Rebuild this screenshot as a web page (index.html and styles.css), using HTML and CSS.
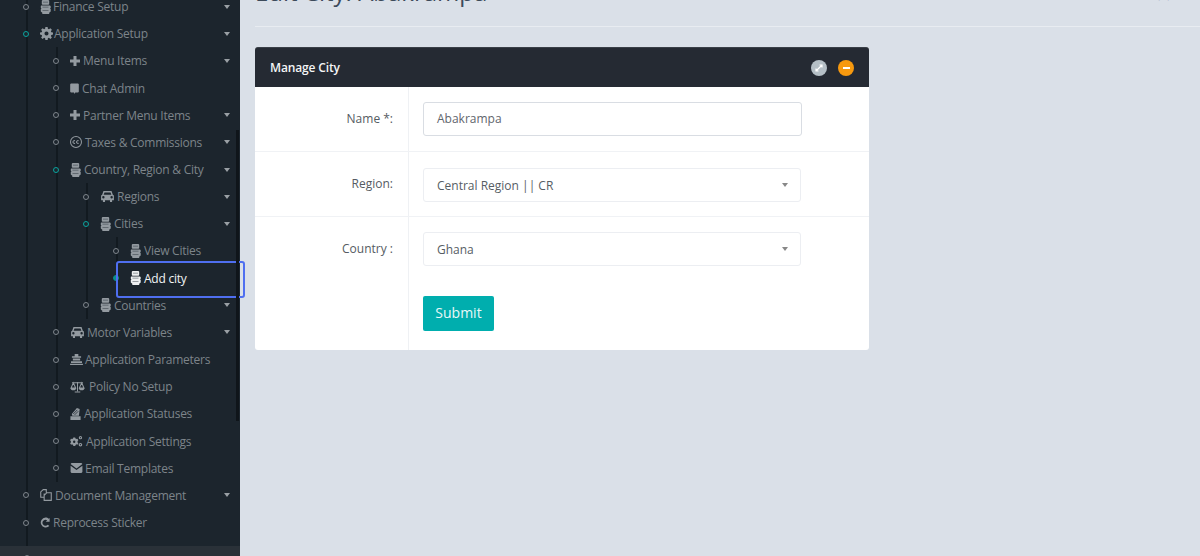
FILE: index.html
```html
<!DOCTYPE html>
<html lang="en">
<head>
<meta charset="utf-8">
<title>Edit City: Abakrampa</title>
<link rel="stylesheet" href="styles.css">
</head>
<body>
<svg class="defs" width="0" height="0" aria-hidden="true">
  <symbol id="i-road" viewBox="0 0 11 14"><path fill-rule="evenodd" d="M2.500 0h6l.7.7v3.500l-.7.6h-6l-.7-.6V.7zM1 5.500h9l.7.7v1.600l-.7.6.7.6v2.500l-1.500 1.200V14H2.300v-1.300L.8 11.500V9l.7-.6-.7-.6V6.200z"/><path fill="#1c252d" opacity=".55" d="M3 1.700h5v.9H3zM2.500 6.800h6v.8h-6zM2.500 10h6v.8h-6z"/></symbol>
  <symbol id="i-gear" viewBox="0 0 14 14"><path fill-rule="evenodd" d="M5.800 0h2.400l.3 1.900 1.100.5L11.200 1.300l1.600 1.600-1.100 1.600.5 1.100 1.800.3v2.300l-1.800.3-.5 1.200 1.100 1.500-1.600 1.600-1.600-1.100-1.100.5-.3 1.800H5.800l-.3-1.800-1.100-.5-1.600 1.100-1.600-1.600 1.100-1.500-.5-1.200L0 8.200V5.900l1.800-.3.500-1.100-1.100-1.600 1.600-1.600 1.600 1.100 1.100-.5zM7 4.800a2.200 2.200 0 100 4.400 2.200 2.200 0 000-4.400z"/></symbol>
  <symbol id="i-plus" viewBox="0 0 12 12"><path d="M4.200 0h3.600v4.200H12v3.600H7.800V12H4.200V7.800H0V4.200h4.200z"/></symbol>
  <symbol id="i-chat" viewBox="0 0 10 12"><path d="M1 .5h8l.8.8v8.300l-.8.8H6L4.500 12v-1.600H1l-.8-.8V1.300z"/></symbol>
  <symbol id="i-cc" viewBox="0 0 14 14"><path fill-rule="evenodd" d="M7 0a7 7 0 110 14A7 7 0 017 0zm0 1.200a5.800 5.800 0 100 11.600A5.800 5.800 0 007 1.200z"/><path fill="none" stroke="currentColor" stroke-width="1.200" d="M5.800 5.600a1.600 1.600 0 100 2.800M10 5.600a1.600 1.600 0 100 2.800"/></symbol>
  <symbol id="i-car" viewBox="0 0 16 12"><path fill-rule="evenodd" d="M3.600 0h8.800l1.400 4 1.200 1v5h-2v2h-2.300v-2H5.300v2H3v-2H1V5l1.200-1zM4.700 1.500 3.800 4h8.400l-.9-2.500zM3.500 5.500a1.300 1.300 0 100 2.600 1.300 1.300 0 000-2.600zm9 0a1.300 1.300 0 100 2.600 1.300 1.300 0 000-2.600z"/></symbol>
  <symbol id="i-stack" viewBox="0 0 14 12"><path d="M5 0h4v2.500h3v1.500H2V2.500h3zM3 5h8v2H3zM1 8h12v1.800H1zM0 10.500h14V12H0z"/></symbol>
  <symbol id="i-scale" viewBox="0 0 16 13"><path fill="none" stroke="currentColor" stroke-width="1.100" d="M2 2h12M8 1v10M5 12h6M3.500 2 1 7.500h5zM12.500 2 10 7.500h5z"/><path d="M.5 7.500h6a3 2.500 0 01-6 0zM9.500 7.500h6a3 2.500 0 01-6 0z"/></symbol>
  <symbol id="i-status" viewBox="0 0 11 13"><path d="M0 9h11v4H0zM1.500 6.500 7 0l3 1-.8 7.500H2z"/><path fill="none" stroke="#1c252d" stroke-width=".8" d="M3 6.500 7.500 2M4.500 7.500 8.500 3.500"/></symbol>
  <symbol id="i-cogs" viewBox="0 0 14 12"><path fill-rule="evenodd" d="M3.500 1.500h2l.4 1.200 1.300.7L8 3l1 1.700-.9 1 .1 1.300.9.800L8 9.500l-1-.4-1 .8-.4 1.100h-2l-.4-1.100-1-.8-1.100.4L0 7.800l.9-.8V5.700L0 4.700 1 3l1.200.4L3.200 2.700zM4.500 5a1.300 1.300 0 100 2.600 1.300 1.300 0 000-2.600z"/><path fill-rule="evenodd" d="M11.300 0a1.800 1.800 0 110 3.600 1.800 1.800 0 010-3.600zm0 1.200a.6.600 0 100 1.200.6.600 0 000-1.200zM11.300 7.500a2 2 0 110 4 2 2 0 010-4zm0 1.300a.7.700 0 100 1.400.7.700 0 000-1.400z"/></symbol>
  <symbol id="i-mail" viewBox="0 0 13 11"><path d="M0 1.200 1 0h11l1 1.200L6.500 6zM0 3l6.500 4.800L13 3v7l-1 1H1l-1-1z"/></symbol>
  <symbol id="i-docs" viewBox="0 0 13 13"><path fill="none" stroke="currentColor" stroke-width="1.200" d="M4 9H.8V3.200L3.500.7h3.300V4M4.500 5V12.300h7.700V4H7.500L4.500 6.800"/></symbol>
  <symbol id="i-redo" viewBox="0 0 12 12"><path d="M10.500 1v4.300H6.200l1.700-1.700A3.300 3.300 0 106 9.600c1 0 1.900-.4 2.500-1.200l1.700 1.500A5.500 5.500 0 116 .5c1.400 0 2.700.5 3.500 1.500z"/></symbol>
</svg>

<div class="app">
  <nav class="sidebar">
    <ul class="tree tree-root">
      <li><div class="row"><svg class="ic ic-road ic-tight"><use href="#i-road"/></svg><span>Finance Setup</span><i class="caret"></i></div></li>
      <li>
        <div class="row is-open"><svg class="ic ic-gear"><use href="#i-gear"/></svg><span>Application Setup</span><i class="caret"></i></div>
        <ul class="tree">
          <li><div class="row"><svg class="ic ic-plus"><use href="#i-plus"/></svg><span>Menu Items</span><i class="caret"></i></div></li>
          <li><div class="row"><svg class="ic ic-chat"><use href="#i-chat"/></svg><span>Chat Admin</span></div></li>
          <li><div class="row"><svg class="ic ic-plus"><use href="#i-plus"/></svg><span>Partner Menu Items</span><i class="caret"></i></div></li>
          <li><div class="row"><svg class="ic ic-cc"><use href="#i-cc"/></svg><span>Taxes &amp; Commissions</span><i class="caret"></i></div></li>
          <li>
            <div class="row is-open"><svg class="ic ic-road"><use href="#i-road"/></svg><span>Country, Region &amp; City</span><i class="caret"></i></div>
            <ul class="tree">
              <li><div class="row"><svg class="ic ic-car"><use href="#i-car"/></svg><span>Regions</span><i class="caret"></i></div></li>
              <li>
                <div class="row is-open"><svg class="ic ic-road"><use href="#i-road"/></svg><span>Cities</span><i class="caret"></i></div>
                <ul class="tree">
                  <li><div class="row"><svg class="ic ic-road"><use href="#i-road"/></svg><span>View Cities</span></div></li>
                  <li><div class="row is-current"><svg class="ic ic-road"><use href="#i-road"/></svg><span>Add city</span></div></li>
                </ul>
              </li>
              <li><div class="row"><svg class="ic ic-road"><use href="#i-road"/></svg><span>Countries</span><i class="caret"></i></div></li>
            </ul>
          </li>
          <li><div class="row"><svg class="ic ic-car"><use href="#i-car"/></svg><span>Motor Variables</span><i class="caret"></i></div></li>
          <li><div class="row"><svg class="ic ic-stack"><use href="#i-stack"/></svg><span>Application Parameters</span></div></li>
          <li><div class="row"><svg class="ic ic-scale"><use href="#i-scale"/></svg><span>Policy No Setup</span></div></li>
          <li><div class="row"><svg class="ic ic-status"><use href="#i-status"/></svg><span>Application Statuses</span></div></li>
          <li><div class="row"><svg class="ic ic-cogs"><use href="#i-cogs"/></svg><span>Application Settings</span></div></li>
          <li><div class="row"><svg class="ic ic-mail"><use href="#i-mail"/></svg><span>Email Templates</span></div></li>
        </ul>
      </li>
      <li><div class="row"><svg class="ic ic-docs"><use href="#i-docs"/></svg><span>Document Management</span><i class="caret"></i></div></li>
      <li><div class="row"><svg class="ic ic-redo"><use href="#i-redo"/></svg><span>Reprocess Sticker</span></div></li>
    </ul>
    <div class="side-foot"></div>
    <div class="scroll-thumb"></div>
  </nav>

  <main class="main">
    <header class="page-head">
      <h1>Edit City: Abakrampa</h1>
      <span class="head-mark">&#215;</span>
    </header>

    <section class="panel">
      <div class="panel-head">
        <h2>Manage City</h2>
        <div class="panel-tools">
          <span class="tool tool-grey"><svg viewBox="0 0 10 10"><path d="M2 8 8 2M5.500 2H8v2.500M2 5.500V8h2.500"/></svg></span>
          <span class="tool tool-orange"><i></i></span>
        </div>
      </div>
      <form class="form">
        <div class="form-row row-name">
          <label class="f-label">Name *:</label>
          <div class="f-field"><div class="input">Abakrampa</div></div>
        </div>
        <div class="form-row row-region">
          <label class="f-label">Region:</label>
          <div class="f-field"><div class="select"><span>Central Region || CR</span><i class="sel-caret"></i></div></div>
        </div>
        <div class="form-row row-country">
          <label class="f-label">Country :</label>
          <div class="f-field">
            <div class="select"><span>Ghana</span><i class="sel-caret"></i></div>
            <button class="btn" type="button">Submit</button>
          </div>
        </div>
      </form>
    </section>
  </main>
</div>
</body>
</html>
```
FILE: styles.css
```css
*, *::before, *::after { box-sizing: border-box; }
html, body { margin: 0; height: 100%; overflow: hidden; }
body { font-family: "Open Sans", "Liberation Sans", sans-serif; font-size: 12px; background: #dae0e8; color: #555; }
.defs { position: absolute; }

.app { display: flex; height: 556px; }

/* sidebar */
.sidebar { position: relative; width: 240px; flex: none; height: 556px; background: #1c252d; display: flex; flex-direction: column; }
.tree { list-style: none; margin: 0 0 0 28px; padding: 0; border-left: 2px solid #121a20; }
.tree-root { margin: -7px 0 0 26px; flex: 1; }
.row { position: relative; display: flex; align-items: center; height: 27.16px; padding: 0 10px 0 12px; color: #7d848a; font-size: 12px; letter-spacing: -.25px; white-space: nowrap; }
.row::before { content: ""; position: absolute; left: -5px; top: 50%; width: 6px; height: 6px; margin-top: -3px; border: 1.500px solid #7f868c; border-radius: 50%; background: #1c252d; }
.row.is-open::before { border-color: #0aa5a0; }
.row.is-current { color: #f2f4f5; }
.row.is-current::before { background: #0a8f8c; border-color: #0a8f8c; }
.row.is-current::after { content: ""; position: absolute; left: -2px; top: -4px; width: 129px; height: 37px; border: 2px solid #4f6ff0; border-radius: 3px; }
.caret { margin-left: auto; width: 0; height: 0; border-left: 3.500px solid transparent; border-right: 3.500px solid transparent; border-top: 4px solid #9aa0a5; }
.ic { flex: none; fill: currentColor; color: #939aa0; margin-right: 3px; }
.is-current .ic { color: #eef0f1; }
.ic-road { width: 11px; height: 14px; margin-right: 3px; }
.ic-road.ic-tight { margin-right: 2px; }
.ic-gear { width: 13px; height: 13px; margin-right: 1px; }
.ic-plus { width: 10px; height: 10px; }
.ic-chat { width: 9px; height: 11px; }
.ic-cc { width: 12px; height: 12px; }
.ic-car { width: 15px; height: 11px; margin-right: 2px; }
.ic-stack { width: 13px; height: 11px; margin-right: 2px; }
.ic-scale { width: 15px; height: 12px; margin-right: 4px; }
.ic-status { width: 11px; height: 12px; }
.ic-cogs { width: 13px; height: 11px; }
.ic-mail { width: 13px; height: 10px; margin-right: 2px; }
.ic-docs { width: 12px; height: 12px; }
.ic-redo { width: 11px; height: 11px; margin-right: 2px; }
.side-foot { position: relative; height: 10px; flex: none; background: #2a3138; }
.side-foot::before { content: ""; position: absolute; left: 24px; top: 9px; width: 6px; height: 6px; border: 1.500px solid #7f868c; border-radius: 50%; }
.scroll-thumb { position: absolute; right: 1px; top: 130px; width: 3px; height: 291px; background: #0f151a; }

/* main */
.main { flex: 1; padding: 0 0 0 15px; min-width: 0; }
.page-head { display: flex; justify-content: space-between; margin-top: -23px; height: 50px; border-bottom: 1px solid #e8ecf1; }
.page-head h1 { margin: 0; font-size: 24px; line-height: 30px; font-weight: 400; color: #3c4a5a; }
.head-mark { margin: 9px 29px 0 0; font-size: 26px; line-height: 16px; color: #7c8aa8; }

.panel { width: 614px; margin-top: 20px; background: #fff; border-radius: 3px; }
.panel-head { display: flex; align-items: center; justify-content: space-between; height: 40px; padding: 0 15px; background: #252a33; border-radius: 3px 3px 0 0; border-top: 1px solid #3a4048; }
.panel-head h2 { margin: 0; font-size: 12px; font-weight: 600; letter-spacing: -.15px; color: #f4f5f6; }
.panel-tools { display: flex; gap: 11px; }
.tool { display: flex; align-items: center; justify-content: center; width: 16px; height: 16px; border-radius: 50%; }
.tool svg { width: 10px; height: 10px; fill: none; stroke: #fff; stroke-width: 1.200; }
.tool-grey { background: #b5bfc6; }
.tool-orange { background: #f7990f; }
.tool-orange i { width: 7px; height: 2px; background: #fff; }

.form-row { display: grid; grid-template-columns: 154px 1fr; }
.row-name { height: 64px; }
.row-region { height: 65px; }
.row-country { height: 134px; }
.form-row + .form-row { border-top: 1px solid #f0f2f5; }
.f-label { padding: 23px 15px 0 0; text-align: right; color: #555b62; font-size: 12px; border-right: 1px solid #eff1f4; }
.f-field { padding: 15px 0 0 14px; }
.row-region .f-field { padding-top: 16px; }
.input { display: flex; align-items: center; width: 379px; height: 34px; padding: 0 13px 2px; border: 1px solid #d9dde3; border-radius: 3px; color: #5f666d; font-size: 12px; }
.select { display: flex; align-items: center; justify-content: space-between; width: 378px; height: 34px; padding: 0 12px 0 13px; border: 1px solid #eceef2; border-radius: 3px; color: #565d64; font-size: 12px; }
.sel-caret { width: 0; height: 0; border-left: 3.500px solid transparent; border-right: 3.500px solid transparent; border-top: 4px solid #888; }
.btn { display: block; width: 71px; height: 35px; margin-top: 30px; padding: 0 0 3px; border: 0; border-radius: 2px; background: #00aeae; color: #e8f8f8; font-family: inherit; font-size: 14px; }
```
